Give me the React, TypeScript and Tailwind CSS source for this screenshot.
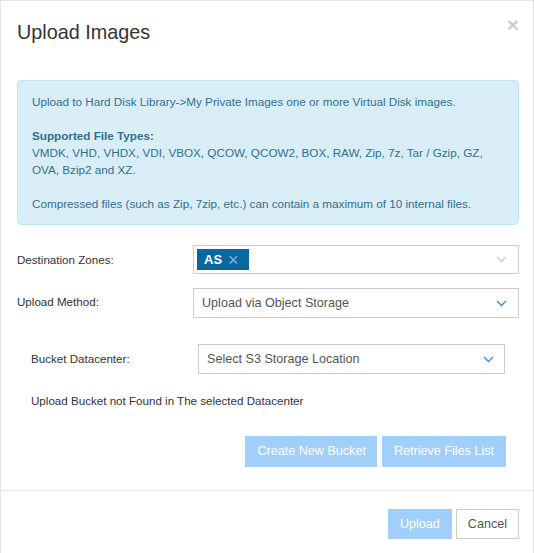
import React from "react";

const Chevron = ({ color }: { color: string }) => (
  <svg width="11" height="7" viewBox="0 0 11 7" fill="none">
    <polyline points="1,1 5.5,5.5 10,1" stroke={color} strokeWidth="1.4" />
  </svg>
);

export default function App() {
  return (
    <div className="h-[553px] w-[534px] border-t border-l border-r border-[#e5e5e5] bg-white font-['Liberation_Sans',Arial,sans-serif] text-[11.6px] text-[#333]">
      {/* Header */}
      <div className="flex items-start justify-between pl-[16px] pr-[14px] pt-[20px]">
        <h4 className="text-[19.8px] leading-[22px] text-[#333]">Upload Images</h4>
        <button className="-mt-[7px] text-[21px] font-bold leading-[21px] text-black opacity-20">×</button>
      </div>

      {/* Body */}
      <div className="pl-[16px] pr-[14px] pt-[37px]">
        <div className="rounded-[4px] border border-[#bce8f1] bg-[#d9edf7] pl-[14px] pr-[14px] pt-[12px] pb-[12px] text-[11.7px] leading-[17px] text-[#31708f]">
          <p>Upload to Hard Disk Library-&gt;My Private Images one or more Virtual Disk images.</p>
          <p className="mt-[17px]">
            <b>Supported File Types:</b>
            <br />
            VMDK, VHD, VHDX, VDI, VBOX, QCOW, QCOW2, BOX, RAW, Zip, 7z, Tar / Gzip, GZ, OVA, Bzip2 and XZ.
          </p>
          <p className="mt-[17px]">Compressed files (such as Zip, 7zip, etc.) can contain a maximum of 10 internal files.</p>
        </div>

        {/* Destination Zones */}
        <div className="mt-[20px] grid grid-cols-[176px_1fr] items-center">
          <label>Destination Zones:</label>
          <div className="flex h-[29px] items-center justify-between border border-[#ccc] pl-[3px] pr-[11px]">
            <span className="flex h-[21px] items-center gap-[6px] bg-[#0b679f] pl-[7px] pr-[10px] text-white">
              <span className="text-[13px] font-bold">AS</span>
              <span className="text-[18px] leading-none text-[#86b3d2]">×</span>
            </span>
            <Chevron color="#cfcfcf" />
          </div>
        </div>

        {/* Upload Method */}
        <div className="mt-[14px] grid grid-cols-[176px_1fr] items-start">
          <label className="pt-[5px]">Upload Method:</label>
          <div className="flex h-[30px] items-center justify-between border border-[#ccc] pl-[8px] pr-[11px] text-[12.6px] text-[#555]">
            <span>Upload via Object Storage</span>
            <Chevron color="#3d8ee0" />
          </div>
        </div>

        {/* Bucket section */}
        <div className="pl-[14px] pr-[13px]">
          <div className="mt-[26px] grid grid-cols-[167px_307px] items-center">
            <label>Bucket Datacenter:</label>
            <div className="flex h-[30px] items-center justify-between border border-[#ccc] pl-[8px] pr-[10px] text-[12.6px] text-[#555]">
              <span>Select S3 Storage Location</span>
              <Chevron color="#3d8ee0" />
            </div>
          </div>
          <p className="mt-[18px]">Upload Bucket not Found in The selected Datacenter</p>
          <div className="mt-[27px] flex justify-end gap-[5px]">
            <button className="h-[31px] bg-[#a2cefa] pl-[12px] pr-[11px] text-[12.6px] text-white">Create New Bucket</button>
            <button className="h-[31px] bg-[#a2cefa] px-[12px] text-[12.6px] text-white">Retrieve Files List</button>
          </div>
        </div>
      </div>

      {/* Footer */}
      <div className="mt-[23px] border-t border-[#e5e5e5] pl-[16px] pr-[14px] pt-[18px]">
        <div className="flex justify-end gap-[4px]">
          <button className="h-[30px] bg-[#a2cefa] px-[12px] text-[12.6px] text-white">Upload</button>
          <button className="h-[30px] border border-[#ccc] bg-white px-[11px] text-[12.6px] text-[#555]">Cancel</button>
        </div>
      </div>
    </div>
  );
}
